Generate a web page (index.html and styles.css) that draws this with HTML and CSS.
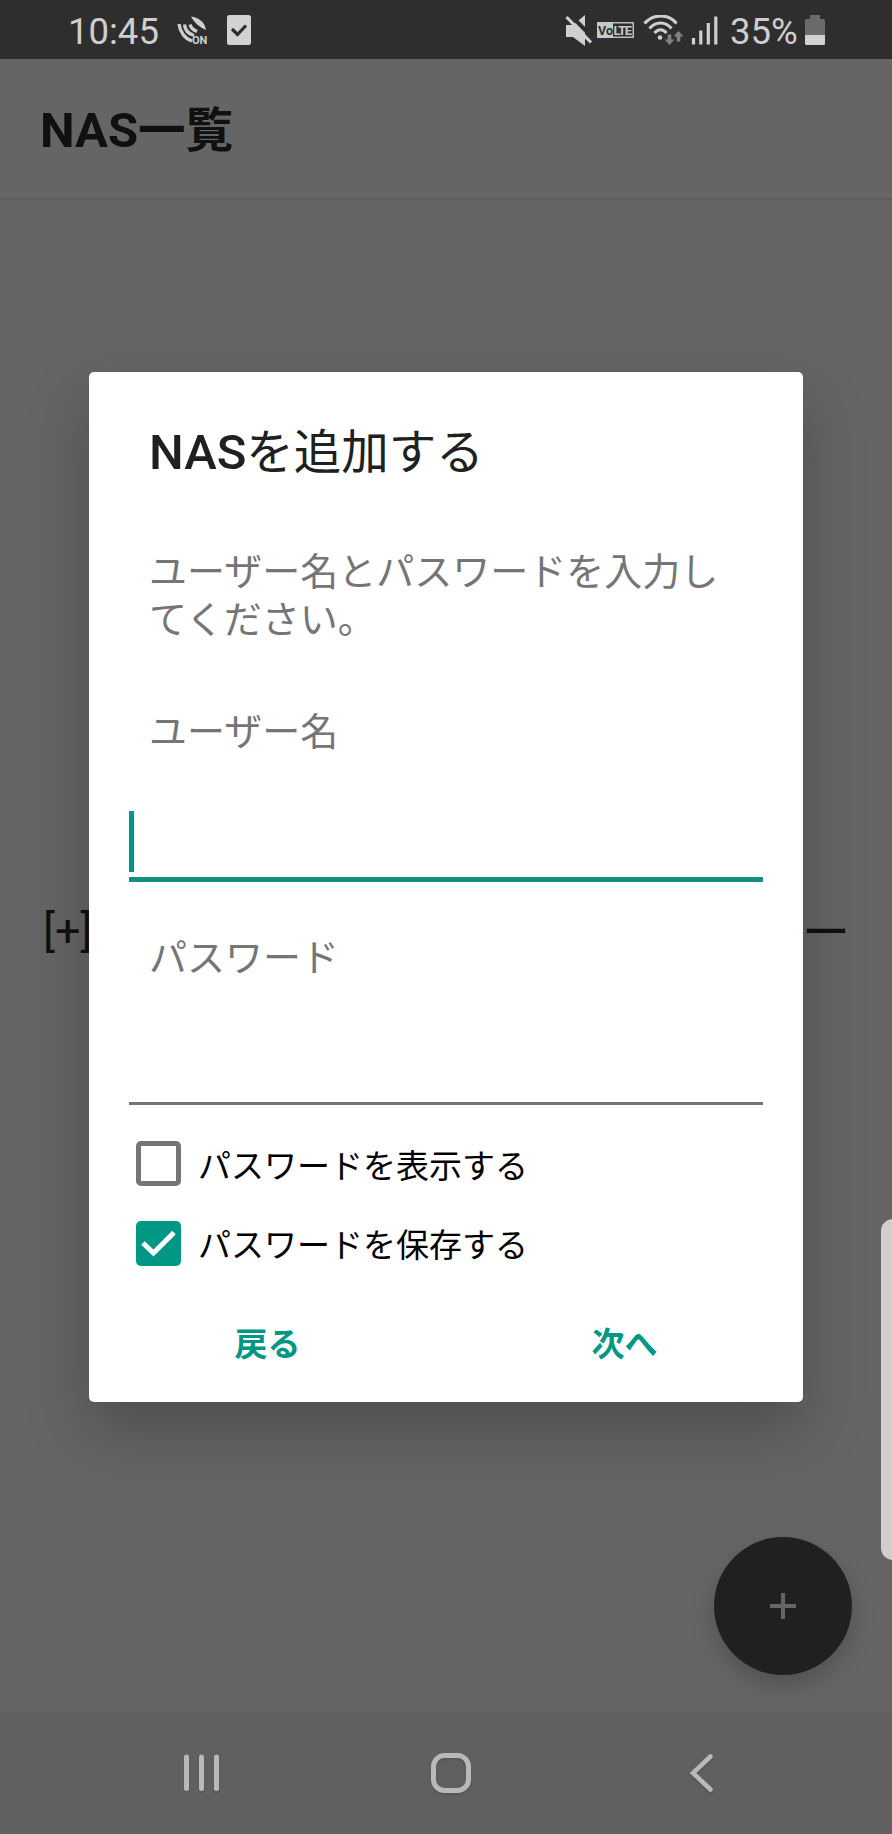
FILE: index.html
```html
<!DOCTYPE html>
<html lang="ja">
<head>
<meta charset="utf-8">
<title>NAS一覧</title>
<link rel="stylesheet" href="styles.css">
</head>
<body>
<div class="phone">
  <header class="status">
    <span class="clock">10:45</span>
    <svg class="nfc" width="32" height="30" viewBox="0 0 32 30" fill="none" stroke="#cfcfcf" stroke-width="3.3">
      <path d="M2 9C3 17 8 24 15 26"/><path d="M7.500 9.500C8 15 12 19 17 20.500"/><path d="M13 9.500C14 13 16 15 20 16.500"/>
      <path d="M14 1.500C21 2 28 7 29 15C24 13 17 8 14 1.500Z" fill="#cfcfcf" stroke="none"/>
      <text x="15" y="28.500" class="on">ON</text>
    </svg>
    <svg class="task" width="24" height="30" viewBox="0 0 24 30"><rect width="24" height="30" rx="2.500" fill="#d2d2d2"/><path d="M5 14L10.500 19.500L19 10.500" fill="none" stroke="#2e2e2e" stroke-width="3.200"/></svg>
    <span class="spacer"></span>
    <svg class="mute" width="28" height="31" viewBox="0 0 28 31"><path d="M1 10H8L20 0V31L8 22H1Z" fill="#cfcfcf"/><path d="M4 -1.500L29 24" stroke="#2e2e2e" stroke-width="4"/><path d="M1.500 2L26 27.500" stroke="#cfcfcf" stroke-width="3.200"/></svg>
    <svg class="volte" width="37" height="16" viewBox="0 0 37 16"><rect x=".75" y=".75" width="35.500" height="14.500" fill="none" stroke="#bdbdbd" stroke-width="1.500"/><path d="M0 0H16V16H0Z" fill="#c8c8c8"/><text x="1" y="12.500" class="vo">Vo</text><text x="16.500" y="12.500" class="lte">LTE</text></svg>
    <svg class="wifi" width="41" height="32" viewBox="0 0 41 32" fill="none" stroke="#cfcfcf" stroke-width="3"><path d="M1.500 8.500C10 -1.500 26 -1.500 33.500 8.500"/><path d="M6.500 13.500C12.500 6 22.500 6 28.500 13.500"/><path d="M11.500 18C15 13.500 20 13.500 23.500 18"/><circle cx="17" cy="22.500" r="2.300" fill="#cfcfcf" stroke="none"/><path d="M24.700 19.500H28.300V24.500H31.500L26.500 30L21.500 24.500H24.700ZM33.700 26.500H37.300V21.500H40.500L35.500 16L30.500 21.500H33.700Z" fill="#828282" stroke="none"/></svg>
    <svg class="signal" width="27" height="30" viewBox="0 0 27 30" stroke="#cfcfcf" stroke-width="3.200"><path d="M2.500 23V29.500M9.800 15.500V29.500M17.300 8V29.500M24.800 1.500V29.500"/></svg>
    <span class="percent">35%</span>
    <svg class="battery" width="20" height="30" viewBox="0 0 20 30"><path d="M5 0H15V4H18.500Q20 4 20 5.500V20H0V5.500Q0 4 1.500 4H5Z" fill="#6b6b6b"/><path d="M0 20H20V28.500Q20 30 18.500 30H1.500Q0 30 0 28.500Z" fill="#d2d2d2"/></svg>
  </header>
  <div class="appbar"><h1><span class="latin">NAS</span>一覧</h1></div>
  <main class="page"><p class="hint"><span>[+]</span><span class="tail">ー</span></p></main>
  <nav class="navbar">
    <svg width="40" height="42" viewBox="0 0 40 42" stroke="#b9b9b9" stroke-width="5" stroke-linecap="round"><path d="M5.500 5V36.500M20.500 5V36.500M35.500 5V36.500"/></svg>
    <svg width="42" height="42" viewBox="0 0 42 42" fill="none" stroke="#b9b9b9" stroke-width="5"><rect x="3.500" y="3.500" width="35" height="35" rx="11"/></svg>
    <svg width="40" height="42" viewBox="0 0 40 42" fill="none" stroke="#b9b9b9" stroke-width="4.500" stroke-linecap="round"><path d="M29.500 4.500L12 21L29.500 37.500"/></svg>
  </nav>
  <div class="fab"><svg width="26" height="26" viewBox="0 0 26 26" stroke="#656565" stroke-width="4"><path d="M13 0V26M0 13H26"/></svg></div>
  <section class="dialog">
    <h2><span class="latin">NAS</span>を追加する</h2>
    <p class="message">ユーザー名とパスワードを入力してください。</p>
    <p class="label">ユーザー名</p>
    <div class="field focused"><i class="caret"></i></div>
    <p class="label second">パスワード</p>
    <div class="field"></div>
    <div class="option"><span class="box"></span>パスワードを表示する</div>
    <div class="option"><span class="box checked"><svg width="45" height="45" viewBox="0 0 45 45" fill="none" stroke="#fff" stroke-width="5"><path d="M7 22L17.500 32L38 11.500"/></svg></span>パスワードを保存する</div>
    <div class="actions"><span>戻る</span><span>次へ</span></div>
  </section>
  <div class="edge"></div>
</div>
</body>
</html>
```
FILE: styles.css
```css
* { box-sizing: border-box; }
body, h1, h2, p { margin: 0; }
body { font-family: "Noto Sans CJK JP", sans-serif; }
.latin { font-family: Roboto, sans-serif; font-size: 49px; line-height: 1; }
.phone {
  position: relative;
  display: flex;
  flex-direction: column;
  width: 892px;
  height: 1834px;
  background: #656565;
  overflow: hidden;
}
.status {
  display: flex;
  align-items: flex-start;
  height: 59px;
  padding: 15px 67px 0 68px;
  background: #2e2e2e;
  color: #cfcfcf;
  font: 36.5px/33px Roboto, sans-serif;
}
.status svg { flex: none; }
.clock { width: 109px; }
.nfc { margin-right: 18px; }
.on { font: 700 11px Roboto, sans-serif; fill: #cfcfcf; stroke: none; }
.spacer { flex: 1; }
.mute { margin-right: 4px; }
.volte { margin: 7px 9px 0 0; }
.vo { font: 700 12.5px Roboto, sans-serif; fill: #2e2e2e; }
.lte { font: 700 13px Roboto, sans-serif; letter-spacing: -1.2px; fill: #c8c8c8; }
.wifi { margin-right: 7px; }
.signal { margin-right: 12px; }
.percent { width: 75px; }
.appbar {
  height: 141px;
  padding: 34px 40px 0;
  border-bottom: 2px solid #5c5c5c;
  color: #101010;
}
h1 { font-size: 47.5px; line-height: 68px; font-weight: 700; }
.page { flex: 1; padding: 701px 43px 0; }
.hint {
  display: flex;
  justify-content: space-between;
  font: 45px/60px Roboto, "Noto Sans CJK JP", sans-serif;
  color: #101010;
}
.tail { margin-right: -1px; padding-top: 2px; font-size: 48px; }
.navbar {
  display: flex;
  justify-content: space-between;
  height: 121px;
  padding: 39px 171px 0 181px;
  background: #606060;
}
.navbar svg { filter: drop-shadow(0 2px 1px #555); }
.fab {
  position: absolute;
  left: 714px;
  top: 1537px;
  display: flex;
  align-items: center;
  justify-content: center;
  width: 138px;
  height: 138px;
  border-radius: 50%;
  background: #202020;
  box-shadow: 0 10px 24px rgba(0, 0, 0, .2);
}
.dialog {
  position: absolute;
  left: 89px;
  top: 372px;
  width: 714px;
  height: 1030px;
  padding: 43px 40px 0;
  border-radius: 5px;
  background: #fff;
  box-shadow: 0 28px 64px rgba(0, 0, 0, .24);
}
h2 { padding-left: 20px; font-size: 47.5px; line-height: 68px; font-weight: 400; color: #202020; }
h2 .latin { font-weight: 500; }
.message, .label { padding-left: 20px; font-size: 38px; line-height: 47.5px; color: #757575; }
.message { margin-top: 62px; width: 610px; }
.label { margin-top: 65px; }
.field { height: 126.5px; border-bottom: 3px solid #757575; }
.focused { height: 129px; padding-top: 58px; border-bottom: 5px solid #158f7f; }
.caret { display: block; width: 5px; height: 61px; background: #009784; }
.second { margin-top: 49px; }
.option {
  display: flex;
  align-items: center;
  height: 79.5px;
  padding-left: 7px;
  font-size: 33px;
  color: #000;
}
.field + .option { margin-top: 19.5px; }
.box { flex: none; width: 45px; height: 45px; margin-right: 17px; border: 5px solid #757575; border-radius: 5px; }
.checked { border: 0; background: #009784; }
.box svg { display: block; }
.actions { display: grid; grid-template-columns: 1fr 1fr; margin: 34px -40px 0; text-align: center; font-size: 33px; line-height: 50px; font-weight: 700; color: #009784; }
.edge {
  position: absolute;
  left: 881px;
  top: 1219px;
  width: 24px;
  height: 341px;
  border-radius: 14px;
  background: #cfcfcf;
}
```
